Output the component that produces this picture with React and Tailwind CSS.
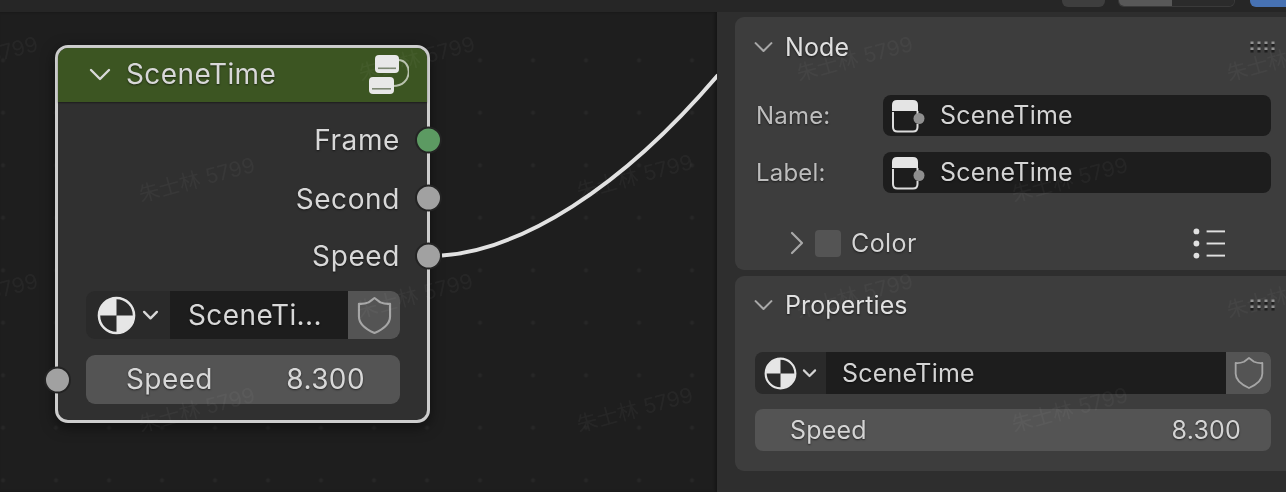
// SceneTime node editor with its sidebar panels
import React from 'react';

const FONT = "font-['Inter','Liberation_Sans',sans-serif]";
const TEXT_SHADOW = '[text-shadow:0_1px_2px_rgba(0,0,0,0.55)]';

// Faint diagonal watermark stamps over the whole picture
const WATERMARKS = [
  'left-[-80px] top-[43px]',
  'left-[357px] top-[43px]',
  'left-[795px] top-[43px]',
  'left-[1225px] top-[43px]',
  'left-[137px] top-[164px]',
  'left-[575px] top-[161px]',
  'left-[1010px] top-[164px]',
  'left-[-80px] top-[280px]',
  'left-[355px] top-[280px]',
  'left-[795px] top-[280px]',
  'left-[1225px] top-[280px]',
  'left-[137px] top-[394px]',
  'left-[575px] top-[394px]',
  'left-[1010px] top-[394px]',
];

// ============================================================================
// ICONS
// ============================================================================
function Chevron({ className = '', width = 2.4 }) {
  return (
    <svg viewBox="0 0 24 24" className={className} fill="none" stroke="currentColor" strokeWidth={width} strokeLinecap="round" strokeLinejoin="round">
      <path d="M3 7l9 9 9-9" />
    </svg>
  );
}

function ChevronRight({ className = '' }) {
  return (
    <svg viewBox="0 0 14 24" className={className} fill="none" stroke="currentColor" strokeWidth="2.2" strokeLinecap="round" strokeLinejoin="round">
      <path d="M2 2l10 10L2 22" />
    </svg>
  );
}

function SceneIcon({ className = '' }) {
  return (
    <svg viewBox="0 0 40 40" className={className}>
      <circle cx="20" cy="20" r="18" fill="#2b2b2b" stroke="#e6e6e6" strokeWidth="2.6" />
      <path d="M20 20V2.5A17.5 17.5 0 0 0 2.5 20Z" fill="#e6e6e6" />
      <path d="M20 20H37.5A17.5 17.5 0 0 1 20 37.5Z" fill="#e6e6e6" />
    </svg>
  );
}

function ShieldIcon({ className = '' }) {
  return (
    <svg viewBox="0 0 36 40" className={className} fill="none" stroke="#a6a6a6" strokeWidth="2.2" strokeLinejoin="round">
      <path d="M18 2 L24 6.5 Q29 8.5 34 8 V21 Q34 31 18 38 Q2 31 2 21 V8 Q7 8.5 12 6.5 Z" />
    </svg>
  );
}

function NodeTreeIcon({ className = '' }) {
  return (
    <svg viewBox="0 0 40 40" className={className}>
      <path d="M29 5 C44 5 44 31 24 31" fill="none" stroke="#b9c2ae" strokeWidth="2" />
      <rect x="6" y="0" width="24" height="18" rx="4" fill="#e8e8e8" />
      <rect x="9" y="12.5" width="18" height="1.6" fill="#7d8873" />
      <rect x="0" y="22" width="25" height="17" rx="4" fill="#e8e8e8" />
      <rect x="3" y="33" width="19" height="1.6" fill="#7d8873" />
    </svg>
  );
}

function NodeIcon({ className = '' }) {
  return (
    <svg viewBox="0 0 34 36" className={className}>
      <path d="M2 14V29Q2 33.5 6.5 33.5H22Q26.5 33.5 26.5 29V26" fill="none" stroke="#dcdcdc" strokeWidth="2" />
      <path d="M1 13V7Q1 2 6 2H22Q27 2 27 7V13Z" fill="#e4e4e4" />
      <path d="M26.5 13v3" stroke="#dcdcdc" strokeWidth="2" />
      <circle cx="28" cy="20.5" r="5.5" fill="#8f8f8f" />
    </svg>
  );
}

function ListIcon({ className = '' }) {
  return (
    <svg viewBox="0 0 34 32" className={className} fill="#e0e0e0">
      <circle cx="3.5" cy="3.5" r="3" />
      <circle cx="3.5" cy="16" r="3" />
      <circle cx="3.5" cy="28.5" r="3" />
      <rect x="14" y="2.5" width="19" height="2" />
      <rect x="14" y="15" width="19" height="2" />
      <rect x="14" y="27.5" width="19" height="2" />
    </svg>
  );
}

function GripIcon({ className = '' }) {
  const dots = [];
  for (const y of [2, 8]) {
    for (const x of [2, 9, 16, 23]) {
      dots.push(<rect key={`${x}-${y}`} x={x - 1.5} y={y - 1.5} width="3" height="2.5" fill="#909090" />);
      dots.push(<rect key={`${x}-${y}-s`} x={x - 1.5} y={y + 1} width="3" height="2.5" fill="#1f1f1f" />);
    }
  }
  return (
    <svg viewBox="0 0 26 12" className={className}>
      {dots}
    </svg>
  );
}

// ============================================================================
// NODE
// ============================================================================
function Socket({ className = '' }) {
  return <span className={`absolute top-1/2 h-[27px] w-[27px] -translate-y-1/2 rounded-full border-2 border-[#232323] ${className}`} />;
}

function OutputRow({ label, socket, className = '' }) {
  return (
    <div className={`relative flex h-[58px] items-center justify-end pb-[1px] pr-[27px] text-[28px] tracking-[0.6px] text-[#d8d8d8] ${className}`}>
      {label}
      <Socket className={`-right-[15px] ${socket}`} />
    </div>
  );
}

function SceneTimeNode() {
  return (
    <div className={`absolute left-[55px] top-[33px] h-[378px] w-[375px] rounded-[13px] border-[3px] border-[#cdcdcd] bg-[#303030] shadow-[0_4px_14px_rgba(0,0,0,0.5)] ${TEXT_SHADOW}`}>
      <div className="flex h-[54px] items-center rounded-t-[10px] bg-[#3c5522] pl-[30px] pr-[18px] text-[#d8d8d8] shadow-[0_1px_2px_rgba(0,0,0,0.4)]">
        <Chevron className="h-[24px] w-[24px] shrink-0" />
        <span className="ml-[14px] pb-[3px] text-[28px] tracking-[0.4px]">SceneTime</span>
        <NodeTreeIcon className="ml-auto h-[40px] w-[40px]" />
      </div>
      <div className="pt-[9px]">
        <OutputRow label="Frame" socket="bg-[#5c9a62]" />
        <OutputRow label="Second" socket="bg-[#a1a1a1]" className="pt-[2px]" />
        <OutputRow label="Speed" socket="bg-[#a1a1a1]" />
      </div>
      <div className="ml-[28px] mr-[27px] mt-[6px] flex h-[48px] overflow-hidden rounded-[9px] bg-[#2a2a2a] text-[28px] tracking-[0.4px] text-[#d8d8d8]">
        <div className="flex w-[82px] items-center pl-[11px]">
          <SceneIcon className="h-[39px] w-[39px] shrink-0" />
          <Chevron width={3.4} className="ml-[6px] h-[17px] w-[17px]" />
        </div>
        <div className="ml-[2px] flex flex-1 items-center bg-[#1d1d1d] pl-[18px]">SceneTi...</div>
        <div className="flex w-[52px] items-center justify-center bg-[#545454]">
          <ShieldIcon className="h-[39px] w-[35px]" />
        </div>
      </div>
      <div className="relative ml-[28px] mr-[27px] mt-[16px] flex h-[49px] items-center justify-between rounded-[9px] bg-[#545454] pb-[1px] pl-[40px] pr-[35px] text-[28px] tracking-[0.4px] text-[#d8d8d8]">
        <span>Speed</span>
        <span>8.300</span>
        <Socket className="-left-[42px] bg-[#a1a1a1]" />
      </div>
    </div>
  );
}

// ============================================================================
// SIDEBAR
// ============================================================================
function PanelHeader({ title }) {
  return (
    <div className="flex h-[34px] items-center pl-[18px] pr-[10px] text-[25px] tracking-[0.1px] text-[#e0e0e0]">
      <Chevron className="h-[21px] w-[21px] text-[#a8a8a8]" />
      <span className="ml-[11px] pt-[2px]">{title}</span>
      <GripIcon className="ml-auto h-[12px] w-[26px]" />
    </div>
  );
}

function NameField({ label, className = '' }) {
  return (
    <div className={`flex h-[41px] items-center pl-[21px] pr-[15px] tracking-[0.2px] ${className}`}>
      <span className="w-[127px] text-[24px] text-[#bdbdbd]">{label}</span>
      <div className="flex h-full flex-1 items-center rounded-[8px] bg-[#1d1d1d] pl-[8px] text-[25px] text-[#d4d4d4]">
        <NodeIcon className="h-[36px] w-[34px]" />
        <span className="ml-[15px]">SceneTime</span>
      </div>
    </div>
  );
}

function Sidebar() {
  return (
    <aside className={`flex w-[569px] flex-col gap-[6px] bg-[#2e2e2e] pl-[18px] pt-[5px] ${TEXT_SHADOW}`}>
      <section className="h-[253px] rounded-l-[9px] bg-[#3d3d3d] pt-[13px]">
        <PanelHeader title="Node" />
        <NameField label="Name:" className="mt-[31px]" />
        <NameField label="Label:" className="mt-[16px]" />
        <div className="mt-[36px] flex h-[28px] items-center pl-[55px] pr-[60px] text-[25px] tracking-[0.4px] text-[#d4d4d4]">
          <ChevronRight className="h-[24px] w-[14px] text-[#a8a8a8]" />
          <span className="ml-[11px] h-[27px] w-[26px] rounded-[4px] bg-[#545454]" />
          <span className="ml-[10px] pt-[2px]">Color</span>
          <ListIcon className="ml-auto h-[31px] w-[33px]" />
        </div>
      </section>
      <section className="h-[195px] rounded-l-[9px] bg-[#3d3d3d] pt-[12px]">
        <PanelHeader title="Properties" />
        <div className="ml-[20px] mr-[15px] mt-[30px] flex h-[42px] overflow-hidden rounded-[8px] bg-[#2a2a2a] text-[25px] tracking-[0.2px] text-[#d4d4d4]">
          <div className="flex w-[70px] items-center pl-[9px]">
            <SceneIcon className="h-[33px] w-[33px] shrink-0" />
            <Chevron width={3.4} className="ml-[5px] h-[15px] w-[15px]" />
          </div>
          <div className="ml-px flex flex-1 items-center bg-[#1d1d1d] pl-[16px] pt-[2px]">SceneTime</div>
          <div className="flex w-[45px] items-center justify-center bg-[#545454]">
            <ShieldIcon className="h-[34px] w-[30px]" />
          </div>
        </div>
        <div className="ml-[20px] mr-[15px] mt-[15px] flex h-[42px] items-center justify-between rounded-[8px] bg-[#545454] pl-[35px] pr-[30px] pt-[2px] text-[25px] tracking-[0.2px] text-[#d4d4d4]">
          <span>Speed</span>
          <span>8.300</span>
        </div>
      </section>
    </aside>
  );
}

// ============================================================================
// MAIN APP
// ============================================================================
function App() {
  return (
    <div className={`relative h-[492px] w-[1286px] overflow-hidden bg-[#1e1e1e] blur-[0.7px] ${FONT}`}>
      <header className="flex h-[12px] items-start justify-end bg-[#262626]">
        <span className="mr-[13px] h-[7px] w-[43px] rounded-b-[6px] bg-[#3e3e3e]" />
        <span className="mr-[15px] flex h-[7px] w-[117px] overflow-hidden rounded-b-[6px] border border-t-0 border-[#3a3a3a]">
          <span className="w-[53px] bg-[#585858]" />
          <span className="flex-1 bg-[#2b2b2b]" />
        </span>
        <span className="h-[7px] w-[36px] rounded-bl-[6px] bg-[#4772b3]" />
      </header>
      <div className="flex h-[480px]">
        <main className="relative flex-1 overflow-hidden bg-[#1e1e1e] bg-[radial-gradient(circle,#272727_1.5px,transparent_2.5px)] bg-[size:53px_52.5px] bg-[position:-23.5px_22px] shadow-[inset_-2px_0_3px_rgba(0,0,0,0.3)]">
          <svg className="absolute inset-0 h-full w-full" fill="none">
            <path d="M442 243.5 C520 238 620 178 718 63" stroke="#e2e2e2" strokeWidth="4" />
          </svg>
          <SceneTimeNode />
        </main>
        <Sidebar />
      </div>
      {WATERMARKS.map((pos) => (
        <span
          key={pos}
          className={`pointer-events-none absolute -rotate-[15deg] whitespace-nowrap font-['Inter','Noto_Sans_CJK_SC',sans-serif] text-[21px] text-white/[0.04] ${pos}`}
        >
          朱士林 5799
        </span>
      ))}
    </div>
  );
}

export default App;
